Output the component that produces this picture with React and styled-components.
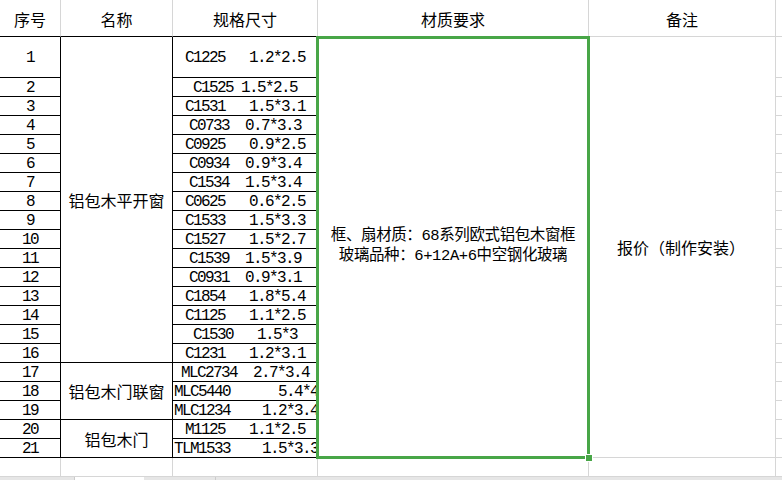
import React from 'react';
import styled, { createGlobalStyle } from 'styled-components';

const BLACK = '#000';
const GRID = '#d6d6d6';
const SELECT = '#48a647';

const windowRows = [
  { no: '1', spec: 'C1225   1.2*2.5' },
  { no: '2', spec: 'C1525 1.5*2.5' },
  { no: '3', spec: 'C1531   1.5*3.1' },
  { no: '4', spec: 'C0733  0.7*3.3' },
  { no: '5', spec: 'C0925   0.9*2.5' },
  { no: '6', spec: 'C0934  0.9*3.4' },
  { no: '7', spec: 'C1534  1.5*3.4' },
  { no: '8', spec: 'C0625   0.6*2.5' },
  { no: '9', spec: 'C1533   1.5*3.3' },
  { no: '10', spec: 'C1527   1.5*2.7' },
  { no: '11', spec: 'C1539  1.5*3.9' },
  { no: '12', spec: 'C0931  0.9*3.1' },
  { no: '13', spec: 'C1854   1.8*5.4' },
  { no: '14', spec: 'C1125   1.1*2.5' },
  { no: '15', spec: 'C1530   1.5*3' },
  { no: '16', spec: 'C1231   1.2*3.1' },
  { no: '17', spec: 'MLC2734  2.7*3.4' },
  { no: '18', spec: 'MLC5440      5.4*4', left: true },
  { no: '19', spec: 'MLC1234    1.2*3.4', left: true },
  { no: '20', spec: 'M1125   1.1*2.5' },
  { no: '21', spec: 'TLM1533    1.5*3.3', left: true },
];

// merged name cells: first row index -> [label, span]
const groups = {
  0: ['铝包木平开窗', 16],
  16: ['铝包木门联窗', 3],
  19: ['铝包木门', 2],
};

const GlobalStyle = createGlobalStyle`
  html, body {
    margin: 0;
    padding: 0;
    background: #fff;
    overflow: hidden;
  }
  body {
    font-family: "Noto Sans CJK SC", sans-serif;
    color: #000;
  }
`;

const Page = styled.div`
  width: 782px;
  height: 480px;
  display: flex;
  flex-direction: column;
  overflow: hidden;
`;

const Sheet = styled.div`
  display: grid;
  grid-template-columns: 61px 112px 145px 271px 187px 1fr;
  grid-template-rows: 37px 41px repeat(20, 19px) 19px;
`;

const Cell = styled.div`
  box-sizing: border-box;
  display: flex;
  align-items: center;
  justify-content: center;
  overflow: hidden;
  white-space: pre;
  border-right: 1px solid ${p => (p.$dark ? BLACK : GRID)};
  border-bottom: 1px solid ${p => (p.$dark ? BLACK : GRID)};
`;

const HeadCell = styled(Cell)`
  border-right-color: ${GRID};
  font-size: 16px;
  padding-top: 1px;
`;

const NumCell = styled(Cell)`
  font-family: "Liberation Mono", "DejaVu Sans Mono", monospace;
  font-size: 16px;
  letter-spacing: -1.6px;
  padding-top: 2px;
`;

const NameCell = styled(Cell)`
  grid-row: span ${p => p.$span};
  font-size: 16px;
`;

const SpecCell = styled(NumCell)`
  justify-content: ${p => (p.$left ? 'flex-start' : 'center')};
  padding-left: ${p => (p.$left ? '1px' : '0')};
`;

const MaterialCell = styled(Cell)`
  grid-row: span 21;
  position: relative;
  z-index: 2;
  overflow: visible;
  flex-direction: column;
  font-family: "Liberation Mono", "Noto Sans CJK SC", monospace;
  font-size: 15.5px;
  letter-spacing: -0.4px;
  line-height: 20px;
  padding-bottom: 3px;

  &::after {
    content: '';
    position: absolute;
    left: -2px;
    right: -2px;
    top: -1px;
    bottom: -2px;
    border: 3px solid ${SELECT};
    pointer-events: none;
  }
`;

const FillHandle = styled.span`
  position: absolute;
  right: -5px;
  bottom: -5px;
  width: 6px;
  height: 6px;
  background: ${SELECT};
  border: 1px solid #fff;
  z-index: 3;
`;

const NoteCell = styled(Cell)`
  grid-row: span 21;
  font-size: 16px;
  padding-right: 2px;
`;

const EdgeCell = styled(Cell)`
  border-right: none;
`;

const TabBar = styled.div`
  display: flex;
  height: 24px;
  background: #e6e6e6;
`;

const Tab = styled.div`
  box-sizing: border-box;
  width: ${p => p.$w}px;
  background: ${p => (p.$active ? '#fff' : 'transparent')};
  border-right: 1px solid ${p => (p.$active ? '#e6e6e6' : '#cbcbcb')};
`;

export default function App() {
  return (
    <Page>
      <GlobalStyle />
      <Sheet>
        <HeadCell $dark>序号</HeadCell>
        <HeadCell $dark>名称</HeadCell>
        <HeadCell $dark>规格尺寸</HeadCell>
        <HeadCell>材质要求</HeadCell>
        <HeadCell>备注</HeadCell>
        <EdgeCell />

        {windowRows.map((row, i) => (
          <React.Fragment key={row.no}>
            <NumCell $dark>{row.no}</NumCell>
            {groups[i] && (
              <NameCell $dark $span={groups[i][1]}>{groups[i][0]}</NameCell>
            )}
            <SpecCell $dark $left={row.left}>{row.spec}</SpecCell>
            {i === 0 && (
              <>
                <MaterialCell>
                  <div>框、扇材质：68系列欧式铝包木窗框</div>
                  <div>玻璃品种：6+12A+6中空钢化玻璃</div>
                  <FillHandle />
                </MaterialCell>
                <NoteCell>报价（制作安装）</NoteCell>
              </>
            )}
            <EdgeCell />
          </React.Fragment>
        ))}

        <Cell />
        <Cell />
        <Cell />
        <Cell />
        <Cell />
        <EdgeCell />
      </Sheet>
      <TabBar>
        <Tab $w={75} />
        <Tab $w={70} $active />
        <Tab $w={71} />
      </TabBar>
    </Page>
  );
}
